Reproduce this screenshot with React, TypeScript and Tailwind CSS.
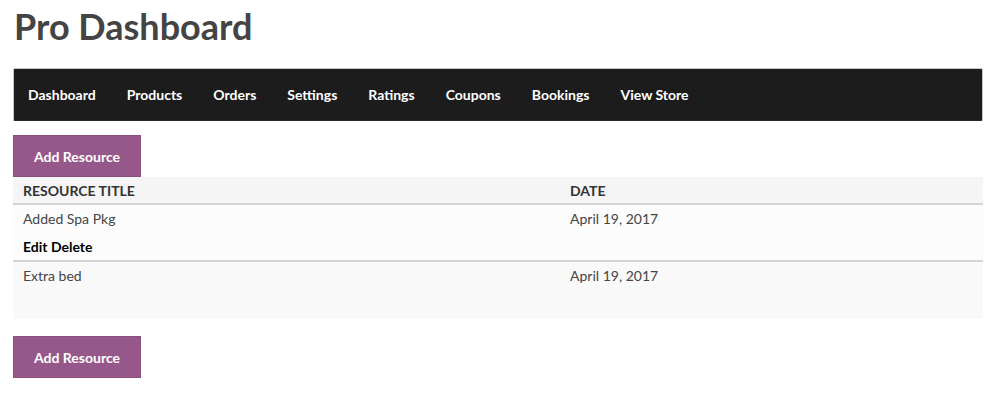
import React from 'react';

const navItems = ['Dashboard', 'Products', 'Orders', 'Settings', 'Ratings', 'Coupons', 'Bookings', 'View Store'];

const resources = [
  { title: 'Added Spa Pkg', date: 'April 19, 2017', actions: true },
  { title: 'Extra bed', date: 'April 19, 2017', actions: false },
];

function AddButton() {
  return (
    <button className="h-[42px] w-[128px] bg-[#96588a] border border-[#8a4f7e] text-white text-[14px] font-bold">
      Add Resource
    </button>
  );
}

export default function App() {
  return (
    <div className="w-[1000px] h-[414px] bg-white px-[13px] pt-[4px] font-['Lato','Liberation_Sans',sans-serif] text-[#4a4a4a]">
      <h1 className="pl-[1px] text-[36px] leading-[44px] font-bold text-[#444]">Pro Dashboard</h1>

      <nav className="mt-[20px] h-[53px] w-[970px] bg-[#1c1c1c] border border-[#c8c8c8] border-b-[#2a2a2a] rounded-[2px] flex items-center gap-[31px] px-[14px]">
        {navItems.map((item) => (
          <a key={item} className="text-white text-[14px] font-bold">
            {item}
          </a>
        ))}
      </nav>

      <div className="mt-[14px]">
        <AddButton />
      </div>

      <div className="w-[970px]">
        <div className="grid grid-cols-[547px_1fr] h-[28px] bg-[#f5f5f5] border-b-2 border-[#d4d4d4] items-center px-[10px] text-[14px] font-bold text-[#333] uppercase">
          <span>Resource Title</span>
          <span>Date</span>
        </div>
        {resources.map((r, i) => (
          <div
            key={r.title}
            className={`grid grid-cols-[547px_1fr] h-[57px] px-[10px] pt-[5px] text-[14px] text-[#444] ${
              i === 0 ? 'bg-[#fcfcfc] border-b-2 border-[#d4d4d4]' : 'bg-[#f9f9f9]'
            }`}
          >
            <div className="flex flex-col">
              <span className="leading-[18px]">{r.title}</span>
              {r.actions && (
                <span className="mt-[10px] leading-[18px] font-bold text-black">Edit Delete</span>
              )}
            </div>
            <span className="leading-[18px]">{r.date}</span>
          </div>
        ))}
      </div>

      <div className="mt-[17px]">
        <AddButton />
      </div>
    </div>
  );
}
